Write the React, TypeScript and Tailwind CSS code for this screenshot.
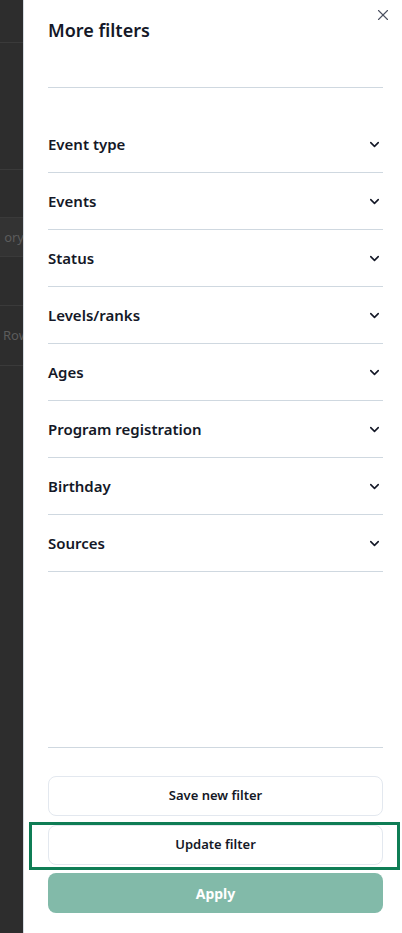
import { ChevronDown, X } from 'lucide-react';

const filters = [
    'Event type',
    'Events',
    'Status',
    'Levels/ranks',
    'Ages',
    'Program registration',
    'Birthday',
    'Sources',
];

const BackdropStrip = () => {
    // the page behind the drawer, dimmed by the overlay
    return (
        <div className="w-[23px] h-full bg-[#2d2d2d] flex flex-col overflow-hidden shrink-0">
            <div className="h-[43px] border-b border-[#3a3a3a]" />
            <div className="h-[127px] border-b border-[#3a3a3a]" />
            <div className="h-[48px] border-b border-[#3a3a3a]" />
            <div className="h-[39px] bg-[#333333] border-b border-[#3a3a3a] flex items-center justify-end">
                <span className="text-[13px] text-[#5c5c5c] leading-none -mr-[1px]">ory</span>
            </div>
            <div className="h-[49px] border-b border-[#3a3a3a]" />
            <div className="h-[60px] border-b border-[#3a3a3a] flex items-center">
                <span className="text-[13px] text-[#5c5c5c] leading-none pl-[3px] whitespace-nowrap">Row</span>
            </div>
        </div>
    );
};

const FilterRow = ({ label }: { label: string }) => {
    return (
        <button className="w-full h-[57px] flex items-center justify-between border-b border-[#cfd8e0] text-left">
            <span className="text-[15px] font-semibold text-[#141827]">{label}</span>
            <ChevronDown size={15} strokeWidth={2.5} className="text-[#141827] mr-[1px]" />
        </button>
    );
};

const App = () => {
    return (
        <div
            className="w-[402px] h-[933px] flex overflow-hidden"
            style={{ fontFamily: '"Noto Sans", "Open Sans", sans-serif' }}
        >
            <BackdropStrip />
            <div className="relative flex-1 h-full bg-white border-l border-[#d5dbe1] pl-6 pr-[19px] flex flex-col">
                <button className="absolute top-[6px] right-[10px] text-[#4b5060]">
                    <X size={18} strokeWidth={1.5} />
                </button>

                <h1 className="pt-4 text-[18px] leading-7 font-semibold text-[#141827]">More filters</h1>
                <div className="mt-[43px] border-b border-[#cfd8e0]" />

                <div className="mt-[28px] flex flex-col">
                    {filters.map(label => (
                        <FilterRow key={label} label={label} />
                    ))}
                </div>

                <div className="flex-1" />

                <div className="border-b border-[#cfd8e0]" />
                <button className="mt-7 h-10 w-full rounded-lg border border-[#e3e8ef] bg-white text-[13px] font-semibold text-[#141827]">
                    Save new filter
                </button>
                <div className="relative mt-[9px]">
                    <button className="h-10 w-full rounded-lg border border-[#e3e8ef] bg-white text-[13px] font-semibold text-[#141827]">
                        Update filter
                    </button>
                    <div className="absolute -top-[3px] -bottom-[5px] -left-[19px] -right-[17px] border-[3px] border-[#0f7d55] pointer-events-none" />
                </div>
                <button className="mt-[8px] mb-[20px] h-10 w-full rounded-lg bg-[#82baa9] text-[14px] font-bold text-white">
                    Apply
                </button>
            </div>
        </div>
    );
};

export default App;
